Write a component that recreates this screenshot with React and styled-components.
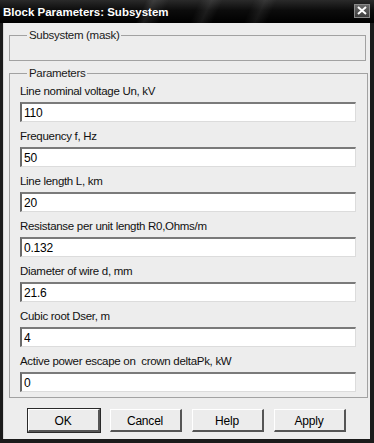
import styled, { createGlobalStyle } from "styled-components";

const GlobalStyle = createGlobalStyle`
  html, body {
    margin: 0;
    padding: 0;
    background: #111;
  }
  * {
    box-sizing: border-box;
  }
`

const Window = styled.div`
  width: 374px;
  height: 443px;
  display: flex;
  flex-direction: column;
  background: #1b1b1b;
  font-family: "Liberation Sans", Arial, sans-serif;
  font-size: 11.5px;
  letter-spacing: -0.3px;
  color: #000;
`

const TitleBar = styled.div`
  height: 23px;
  display: flex;
  align-items: center;
  justify-content: space-between;
  padding: 0 4px 0 3px;
  background:
    linear-gradient(115deg, transparent 0 38%, rgba(255,255,255,0.10) 40%, transparent 44%,
      transparent 52%, rgba(255,255,255,0.08) 55%, transparent 58%,
      transparent 66%, rgba(255,255,255,0.07) 69%, transparent 72%),
    linear-gradient(180deg, #2a2a2a 0%, #0c0c0c 45%, #000 100%);
  > span {
    color: #fff;
    font-weight: bold;
    font-size: 11.5px;
    letter-spacing: 0;
  }
`

const CloseButton = styled.div`
  width: 16px;
  height: 14px;
  margin-top: -2px;
  display: flex;
  align-items: center;
  justify-content: center;
  background: linear-gradient(180deg, #6a6a6a, #3c3c3c);
  border: 1px solid #8a8a8a;
`

const Body = styled.div`
  flex: 1;
  margin: 0 4px 4px 3px;
  padding: 5px 4px 0 5px;
  background: #ededed;
  border-left: 1px solid #d8d8d8;
  display: flex;
  flex-direction: column;
`

const Group = styled.fieldset`
  margin: 0;
  padding: ${({ $pad }) => $pad};
  border: 1px solid #a2a2a2;
  min-height: ${({ $minHeight }) => $minHeight || 'auto'};
  & + & {
    margin-top: 5px;
  }
  > legend {
    padding: 0 2px;
    margin-left: 7px;
    line-height: 14px;
    color: #1a1a1a;
  }
`

const Field = styled.div`
  display: flex;
  flex-direction: column;
  & + & {
    margin-top: 5px;
  }
  > label {
    line-height: 18px;
    margin-bottom: 2px;
    color: #111;
  }
`

const Input = styled.input`
  height: 20px;
  width: 336px;
  padding: 1px 2px 0;
  font-family: inherit;
  font-size: 12px;
  letter-spacing: -0.2px;
  color: #000;
  background: #fff;
  border-style: solid;
  border-width: 2px 1px 1px 2px;
  border-color: #7a7a7a #dcdcdc #dcdcdc #6a6a6a;
  outline: none;
`

const ButtonRow = styled.div`
  display: flex;
  justify-content: center;
  gap: 10px;
  margin-top: 11px;
  padding-right: 2px;
`

const Button = styled.button`
  width: 72px;
  height: 23px;
  padding: 2px 0 0;
  font-family: inherit;
  font-size: 12px;
  letter-spacing: -0.2px;
  color: #000;
  background: #ececec;
  border-style: solid;
  border-width: 1px 2px 2px 1px;
  border-color: #fff #555 #555 #fff;
  box-shadow: ${({ $default }) => $default ? '0 0 0 1px #2a2a2a' : 'none'};
`

const params = [
  { label: "Line nominal voltage Un, kV", value: "110" },
  { label: "Frequency f, Hz", value: "50" },
  { label: "Line length L, km", value: "20" },
  { label: "Resistanse per unit length R0,Ohms/m", value: "0.132" },
  { label: "Diameter of wire d, mm", value: "21.6" },
  { label: "Cubic root Dser, m", value: "4" },
  { label: "Active power escape on  crown deltaPk, kW", value: "0" },
]

const App = () => {
  return (
    <>
      <GlobalStyle />
      <Window>
        <TitleBar>
          <span>Block Parameters: Subsystem</span>
          <CloseButton>
            <svg width="10" height="9" viewBox="0 0 10 9">
              <path d="M1 1 L9 8 M9 1 L1 8" stroke="#fff" strokeWidth="2" />
            </svg>
          </CloseButton>
        </TitleBar>
        <Body>
          <Group $pad="0 10px" $minHeight="33px">
            <legend>Subsystem (mask)</legend>
          </Group>
          <Group $pad="2px 11px 5px 10px">
            <legend>Parameters</legend>
            {params.map((p) => (
              <Field key={p.label}>
                <label>{p.label.replace(/  /g, "\u00a0 ")}</label>
                <Input defaultValue={p.value} />
              </Field>
            ))}
          </Group>
          <ButtonRow>
            <Button $default>OK</Button>
            <Button>Cancel</Button>
            <Button>Help</Button>
            <Button>Apply</Button>
          </ButtonRow>
        </Body>
      </Window>
    </>
  );
}

export default App;
